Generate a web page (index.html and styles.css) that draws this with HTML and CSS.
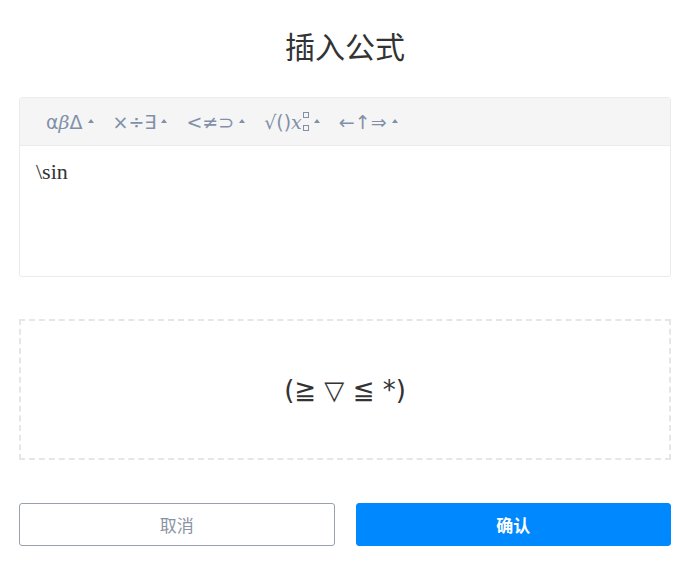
FILE: index.html
```html
<!DOCTYPE html>
<html lang="zh-CN">
<head>
    <meta charset="UTF-8">
    <meta name="viewport" content="width=device-width, initial-scale=1.0">
    <title>插入公式</title>
    <link rel="stylesheet" href="styles.css">
</head>
<body>
    <div class="dialog">
        <h1 class="title">插入公式</h1>

        <div class="editor">
            <div class="toolbar">
                <span class="group">α<em>β</em>Δ<i class="caret"></i></span>
                <span class="group">×÷∃<i class="caret"></i></span>
                <span class="group">&lt;≠⊃<i class="caret"></i></span>
                <span class="group">√()<span class="var">x<span class="scripts"><b></b><b></b></span></span><i class="caret"></i></span>
                <span class="group">←↑⇒<i class="caret"></i></span>
            </div>
            <div class="source">\sin</div>
        </div>

        <div class="preview">(≧ ▽ ≦ *)</div>

        <div class="actions">
            <button class="btn btn-cancel">取消</button>
            <button class="btn btn-ok">确认</button>
        </div>
    </div>
</body>
</html>
```

FILE: styles.css
```css
body {
    margin: 0;
    background: #fff;
    font-family: "Liberation Serif", "Noto Sans CJK SC", serif;
    color: #333;
}
.dialog {
    width: 652px;
    margin-left: 19px;
}
.title {
    margin: 0;
    padding-top: 23px;
    height: 97px;
    box-sizing: border-box;
    text-align: center;
    font-family: "Noto Sans CJK SC", sans-serif;
    font-weight: 400;
    font-size: 30px;
    line-height: 44px;
    color: #333;
}
.editor {
    border: 1px solid #ebebeb;
    border-radius: 3px;
    height: 180px;
    box-sizing: border-box;
}
.toolbar {
    background: #f5f5f5;
    height: 47px;
    border-bottom: 1px solid #ebebeb;
    display: flex;
    align-items: center;
    padding-left: 26px;
    gap: 19px;
    font-family: "DejaVu Sans", sans-serif;
    font-size: 19px;
    color: #8190a8;
}
.group {
    display: flex;
    align-items: center;
}
.group em {
    font-family: "DejaVu Serif", serif;
    font-style: italic;
}
.caret {
    width: 0;
    height: 0;
    border-left: 3px solid transparent;
    border-right: 3px solid transparent;
    border-bottom: 4px solid #8190a8;
    margin-left: 5px;
    margin-top: -2px;
}
.var {
    display: flex;
    align-items: center;
    font-family: "DejaVu Serif", serif;
    font-style: italic;
}
.scripts {
    display: flex;
    flex-direction: column;
    justify-content: space-between;
    height: 19px;
    margin-left: 1px;
}
.scripts b {
    display: block;
    width: 4px;
    height: 4px;
    border: 1px solid #8190a8;
}
.source {
    padding: 13px 16px;
    font-size: 22px;
    color: #333;
}
.preview {
    margin-top: 42px;
    height: 141px;
    box-sizing: border-box;
    border: 2px dashed #e6e6e6;
    display: flex;
    align-items: center;
    justify-content: center;
    font-family: "DejaVu Sans", sans-serif;
    font-size: 26px;
    color: #333;
}
.actions {
    display: flex;
    gap: 21px;
    margin-top: 43px;
}
.btn {
    flex: 1;
    height: 43px;
    border-radius: 3px;
    font-family: "Noto Sans CJK SC", sans-serif;
    font-size: 17px;
    cursor: pointer;
}
.btn-cancel {
    background: #fff;
    border: 1px solid #9aa1ab;
    color: #8a93a3;
}
.btn-ok {
    background: #0088ff;
    border: 1px solid #0088ff;
    color: #fff;
    font-weight: 700;
}
```
